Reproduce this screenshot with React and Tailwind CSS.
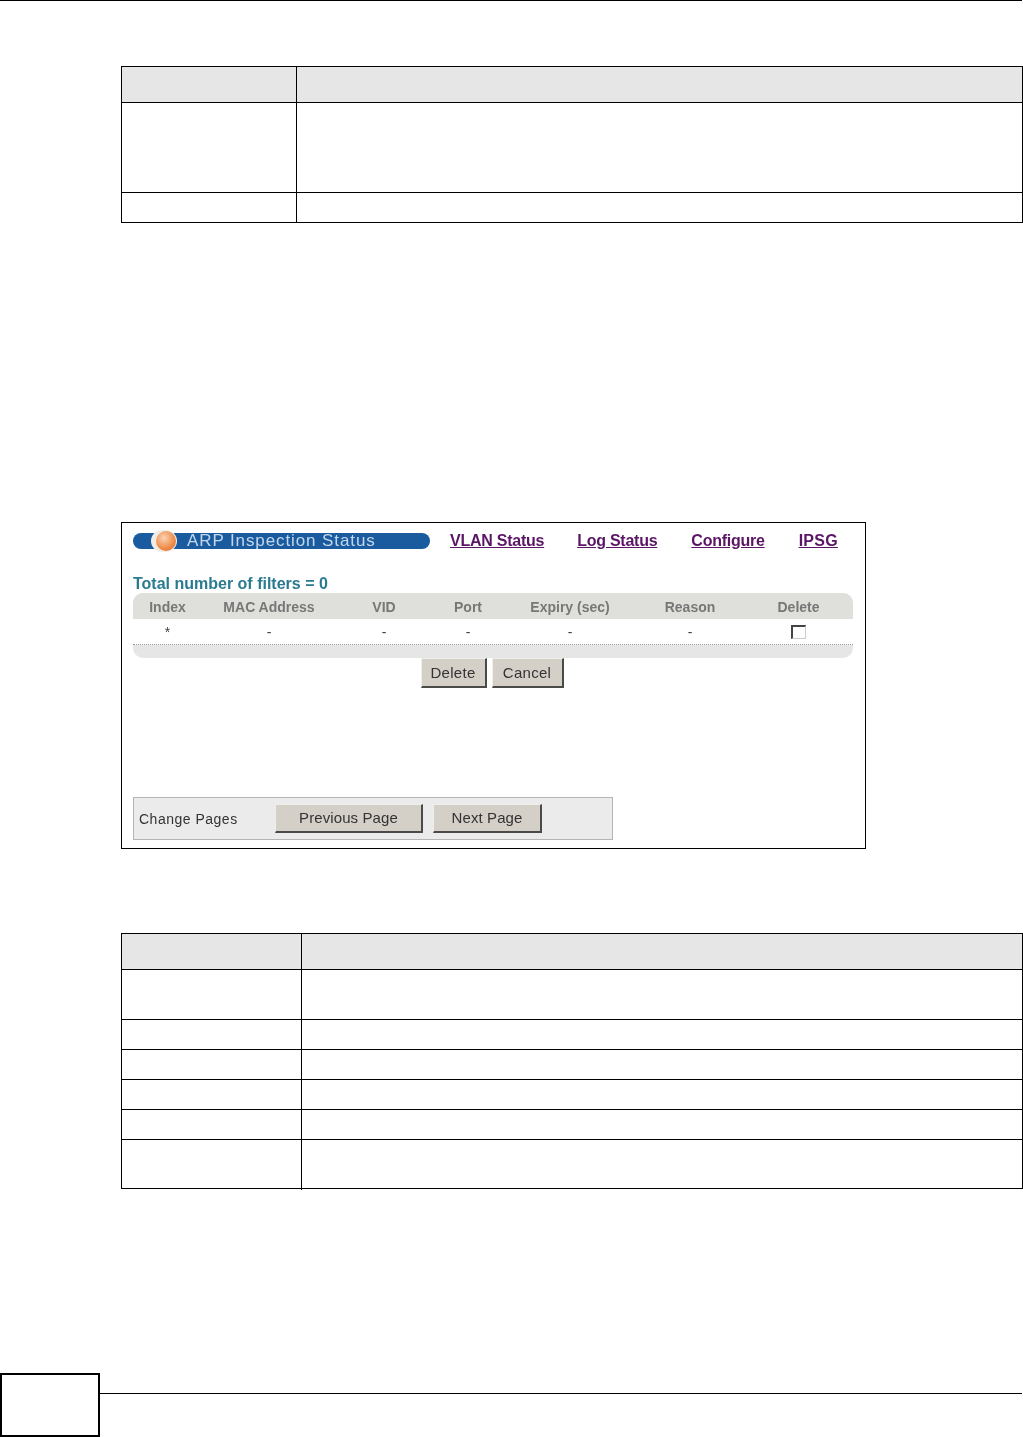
const COLS = ['Index', 'MAC Address', 'VID', 'Port', 'Expiry (sec)', 'Reason', 'Delete']
const LINKS = [
  { label: 'VLAN Status', className: 'tracking-[-0.25px]' },
  { label: 'Log Status', className: 'tracking-[-0.25px] mr-px' },
  { label: 'Configure', className: 'tracking-[-0.25px] mr-[1px]' },
  { label: 'IPSG', className: 'tracking-[0.25px]' },
]

// the manual's spec tables have all their text blanked, only the rules are left
function SpecTable({ colWidth, rows, tail = 0 }) {
  return (
    <div className="w-[902px] border-t border-l border-r border-black">
      <div className="flex h-[36px] bg-[#e6e6e6] border-b border-black">
        <div className="border-r border-black" style={{ width: colWidth }} />
      </div>
      {rows.map((h, i) => (
        <div key={i} className="flex border-b border-black" style={{ height: h }}>
          <div className="border-r border-black" style={{ width: colWidth, height: h + tail }} />
        </div>
      ))}
    </div>
  )
}

function RaisedButton({ width, height, tracking, children }) {
  return (
    <button
      className={`flex items-center justify-center bg-[#d4d0c8] border-t border-l border-t-[#f0eeea] border-l-[#f0eeea] border-r-2 border-b-2 border-r-[#4a4a48] border-b-[#4a4a48] text-[15px] text-[#333] ${tracking}`}
      style={{ width, height }}
    >
      {children}
    </button>
  )
}

function StatusPanel() {
  return (
    <div className="w-[745px] h-[327px] border border-black pt-[10px] pl-[11px] blur-[0.3px]">
      {/* Title bar and links */}
      <div className="flex items-center h-[16px]">
        <div className="flex items-center w-[297px] h-[16px] rounded-full bg-[#1a5a9e]">
          <div className="ml-[18px] w-[26px] h-[22px] shrink-0 rounded-full bg-[#f3ece5] flex items-center">
            <div className="ml-[5px] w-[20px] h-[20px] rounded-full bg-[radial-gradient(circle_at_40%_35%,#fbd3b2,#ee8a48_60%,#d5662a)]" />
          </div>
          <span className="ml-[10px] text-[17px] tracking-[0.9px] text-[#c3d7ec] whitespace-nowrap">ARP Inspection Status</span>
        </div>
        <div className="ml-[20px] flex gap-[33px]">
          {LINKS.map(l => (
            <a key={l.label} className={`text-[16px] font-bold underline text-[#5a1565] whitespace-nowrap ${l.className}`}>{l.label}</a>
          ))}
        </div>
      </div>

      <div className="mt-[25px] h-[19px] text-[16px] leading-[19px] font-bold text-[#2a7a92] whitespace-nowrap">Total number of filters = 0</div>

      {/* Filter table */}
      <div className="w-[720px] rounded-[10px] overflow-hidden bg-[#e6e6e6]">
        <div className="grid grid-cols-[69px_134px_96px_72px_132px_108px_109px] h-[26px] pt-[2px] items-center bg-[#dfdfdc] text-[14px] font-bold text-[#777]">
          {COLS.map(c => <div key={c} className="text-center whitespace-nowrap">{c}</div>)}
        </div>
        <div className="grid grid-cols-[69px_134px_96px_72px_132px_108px_109px] h-[26px] pt-px items-center bg-white border-b border-dotted border-[#999] text-[14px] text-[#444]">
          <div className="text-center">*</div>
          <div className="text-center">-</div>
          <div className="text-center">-</div>
          <div className="text-center">-</div>
          <div className="text-center">-</div>
          <div className="text-center">-</div>
          <div className="flex justify-center">
            <div className="w-[15px] h-[14px] border-t-2 border-l-2 border-[#444] border-r border-b border-r-[#ccc] border-b-[#ccc] bg-white" />
          </div>
        </div>
        <div className="h-[13px]" />
      </div>

      <div className="w-[718px] flex justify-center gap-[5px]">
        <RaisedButton width={66} height={30} tracking="tracking-[0.3px] pt-px">Delete</RaisedButton>
        <RaisedButton width={72} height={30} tracking="tracking-[0.3px] pt-px">Cancel</RaisedButton>
      </div>

      {/* Pager */}
      <div className="mt-[109px] w-[480px] h-[43px] flex items-center bg-[#ebebeb] border border-[#b5b5b5] pl-[5px]">
        <span className="w-[136px] pt-[2px] text-[14px] tracking-[0.5px] text-[#333] whitespace-nowrap">Change Pages</span>
        <RaisedButton width={148} height={29} tracking="tracking-[0.1px]">Previous Page</RaisedButton>
        <div className="w-[10px]" />
        <RaisedButton width={109} height={29} tracking="tracking-[0.1px]">Next Page</RaisedButton>
      </div>
    </div>
  )
}

export default function App() {
  return (
    <div className="w-[1023px] h-[1437px] bg-white overflow-hidden flex flex-col font-['Liberation_Sans',Arial,sans-serif]">
      <div className="h-px w-[1022px] bg-black" />

      <div className="mt-[65px] ml-[121px]">
        <SpecTable colWidth={175} rows={[90, 30]} />
      </div>

      <div className="mt-[299px] ml-[121px]">
        <StatusPanel />
      </div>

      <div className="mt-[84px] ml-[121px]">
        <SpecTable colWidth={180} rows={[50, 30, 30, 30, 30, 49]} tail={1} />
      </div>

      {/* Page footer */}
      <div className="mt-auto flex items-start">
        <div className="w-[100px] h-[64px] border-2 border-black" />
        <div className="mt-[20px] w-[922px] h-px bg-black" />
      </div>
    </div>
  )
}
